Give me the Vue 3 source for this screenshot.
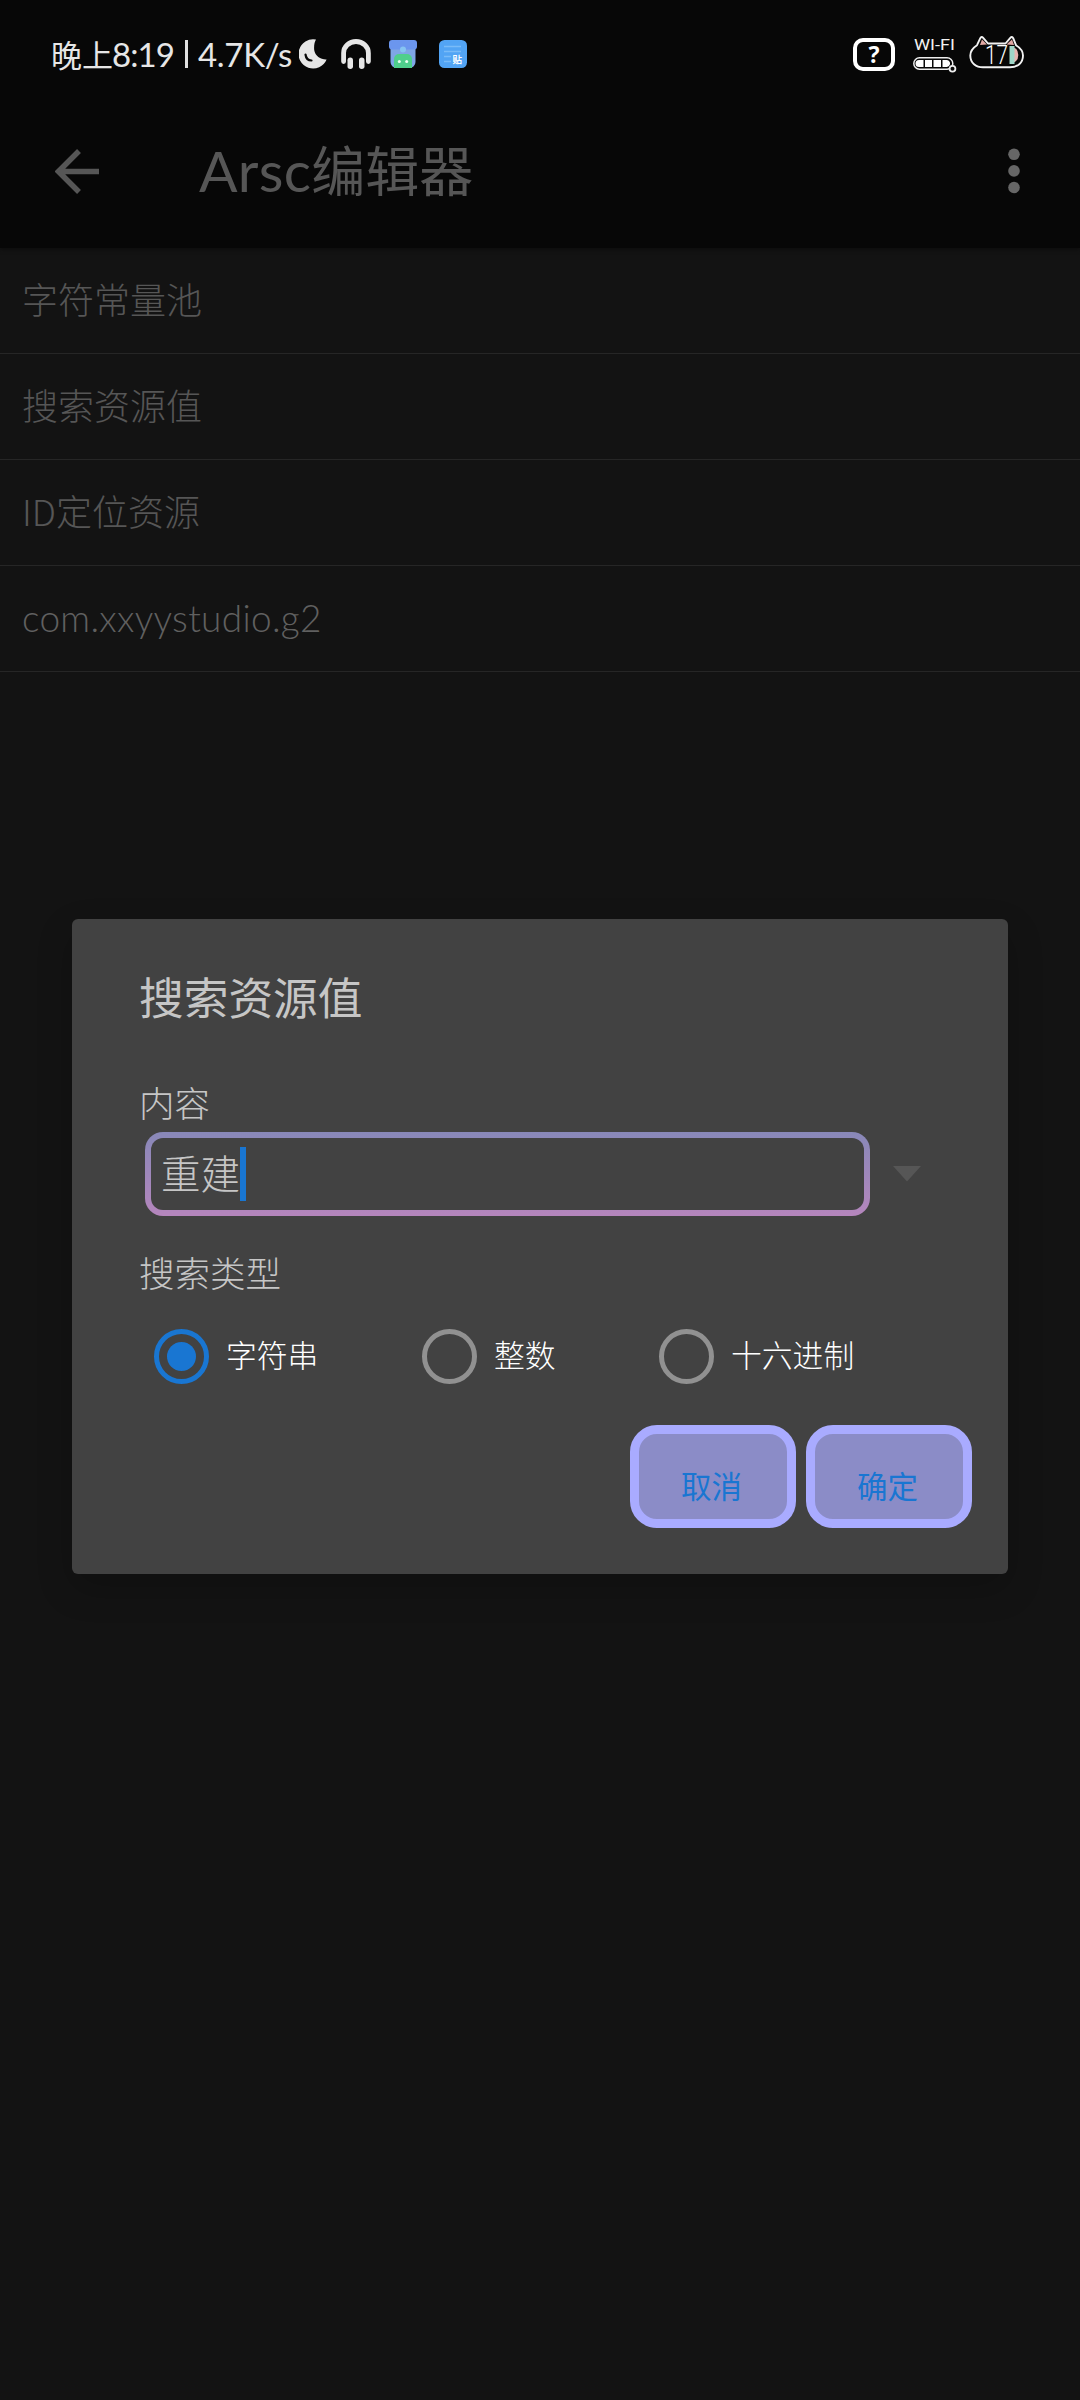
<script setup>
import { ref } from 'vue'

const items = ['字符常量池', '搜索资源值', 'ID定位资源']
const packageName = 'com.xxyystudio.g2'
const keyword = ref('重建')
const types = [
  { id: 'string', label: '字符串' },
  { id: 'integer', label: '整数' },
  { id: 'hex', label: '十六进制' },
]
const selected = ref('string')
</script>

<template>
  <div class="screen">
    <header class="top">
      <div class="status">
        <div class="status-left">
          <span class="clock"><span class="period">晚上</span><span class="time">8:19</span><i class="bar"></i><span class="speed">4.7K/s</span></span>
          <svg class="ic moon" width="28" height="30" viewBox="0 0 28 30">
            <path d="M17 0.6A14.6 14.6 0 1 0 27.6 20.5C22 20.8 16 17 15.2 11C14.8 7 15.5 3 17 .6Z" fill="#e6e6e6" />
            <path d="M6.5 15.5C7 19.500 9.500 21.500 12.500 21.500" fill="none" stroke="#080808" stroke-width="2.200" stroke-linecap="round" />
          </svg>
          <svg class="ic phones" width="30" height="30" viewBox="0 0 30 30">
            <path d="M2.600 22.500V14A12.400 11.500 0 0 1 27.400 14V22.500" fill="none" stroke="#e6e6e6" stroke-width="4.800" stroke-linecap="round" />
            <rect x="6.500" y="18.500" width="5.500" height="11.500" rx="2.700" fill="#e6e6e6" />
            <rect x="18" y="18.500" width="5.500" height="11.500" rx="2.700" fill="#e6e6e6" />
          </svg>
          <svg class="ic bin" width="28" height="28" viewBox="0 0 28 28">
            <path d="M1.500 8H26.500V22A6 6 0 0 1 20.500 28H7.500A6 6 0 0 1 1.500 22Z" fill="#7fa6e6" />
            <rect width="28" height="9.500" rx="3" fill="#6b96ee" />
            <path d="M5 28V19A5 5 0 0 1 10 14H18A5 5 0 0 1 23 19V28Z" fill="#4fcf8c" />
            <circle cx="14" cy="9.500" r="3" fill="#86c4f2" />
            <circle cx="10.300" cy="21.500" r="1.500" fill="#e8fff0" />
            <circle cx="17.700" cy="21.500" r="1.500" fill="#e8fff0" />
          </svg>
          <svg class="ic note" width="28" height="28" viewBox="0 0 28 28">
            <rect width="28" height="28" rx="5.500" fill="#52a4f4" />
            <path d="M5 6.500H22M5 11.500H22M5 16.500H12M5 21.500H12" stroke="#79bbf8" stroke-width="1.500" />
            <text x="13.500" y="23" font-size="9.500" font-weight="700" fill="#fff">贴</text>
          </svg>
        </div>
        <div class="status-right">
          <span class="sim">?</span>
          <span class="wifi">
            <svg class="wifi-label" width="46" height="20" viewBox="0 0 46 20">
              <text x="1" y="15" font-size="15" textLength="41" lengthAdjust="spacingAndGlyphs" fill="#f2f2f2">WI-FI</text>
            </svg>
            <svg class="cell" width="46" height="16" viewBox="0 0 46 16">
              <rect x="0.800" y="0.800" width="39" height="11.400" rx="5.700" fill="none" stroke="#eee" stroke-width="1.500" />
              <path d="M6 3H10.500V10H6A3.500 3.500 0 0 1 6 3ZM12 3H19V10H12ZM20.500 3H28V10H20.500ZM29.500 3H34A3.500 3.500 0 0 1 36 9L34 10H29.500Z" fill="#fff" />
              <circle cx="39.500" cy="11.700" r="2.900" fill="#080808" stroke="#eee" stroke-width="1.800" />
            </svg>
          </span>
          <svg class="cat" width="56" height="34" viewBox="0 0 56 34">
            <path d="M44 12A8 8.500 0 0 1 44 28Z" fill="#e8b4b0" />
            <path d="M40.500 11H45.500V29H40.500Z" fill="#9fd6c8" />
            <path d="M11 10L13 4.500L18 9.500ZM37.500 9.500L43 4.500L45 10Z" fill="#e2a8a4" />
            <path d="M19 8.500L14.200 2.800Q12.500 1 11.300 3.200L8 10.200Q1.300 14.500 1.300 20.500C1.300 28 7 32.300 14 32.300H41C48.500 32.300 54 28 54 20.500Q54 14.500 47 10.200L44.200 3.200Q43 1 41.300 2.800L36.500 8.500Z" fill="none" stroke="#f2f2f2" stroke-width="1.900" stroke-linejoin="round" />
            <text x="16" y="28.500" font-size="26" fill="#fff" textLength="23" lengthAdjust="spacingAndGlyphs">17</text>
          </svg>
        </div>
      </div>
      <div class="toolbar">
        <svg class="back" width="44" height="45" viewBox="0 0 44 45">
          <path d="M44 22.500H5M24 2L3.500 22.500L24 43" fill="none" stroke="#565656" stroke-width="5.500" />
        </svg>
        <h1><span class="latin">Arsc</span>编辑器</h1>
        <svg class="more" width="12" height="46" viewBox="0 0 12 46">
          <circle cx="6" cy="6.300" r="5.800" fill="#666" />
          <circle cx="6" cy="22.900" r="5.800" fill="#666" />
          <circle cx="6" cy="39.500" r="5.800" fill="#666" />
        </svg>
      </div>
    </header>

    <ul class="list">
      <li v-for="t in items" :key="t">{{ t }}</li>
      <li class="pkg">{{ packageName }}</li>
    </ul>

    <section class="dialog">
      <h2>搜索资源值</h2>
      <label class="caption">内容</label>
      <div class="field-row">
        <div class="field"><span class="value">{{ keyword }}</span><i class="caret"></i></div>
        <svg width="28" height="16" viewBox="0 0 28 16"><path d="M0 0H28L14 15.500Z" fill="#565656" /></svg>
      </div>
      <label class="caption second">搜索类型</label>
      <div class="radios">
        <div v-for="t in types" :key="t.id" :class="['radio', t.id, { on: selected === t.id }]" @click="selected = t.id">
          <i class="ring"></i><span>{{ t.label }}</span>
        </div>
      </div>
      <div class="actions">
        <button>取消</button>
        <button>确定</button>
      </div>
    </section>
  </div>
</template>

<style>
body {
  background: #131313;
}
</style>

<style scoped>
.screen {
  position: relative;
  width: 1080px;
  height: 2400px;
  overflow: hidden;
  background: #131313;
  font-family: "Noto Sans CJK SC", sans-serif;
  font-weight: 300;
}
.top {
  height: 248px;
  background: #070707;
  box-shadow: 0 1px 4px #0c0c0c;
}
.status {
  height: 108px;
  display: flex;
  justify-content: space-between;
  color: #e6e6e6;
}
.status-left {
  display: flex;
  padding: 0 0 0 51px;
}
.clock {
  width: 248px;
  display: flex;
  font-size: 31px;
  line-height: 40px;
  padding-top: 34px;
  box-sizing: border-box;
  font-weight: 400;
  white-space: nowrap;
}
.period { width: 61px; }
.time, .speed {
  font-family: Lato, "Noto Sans", sans-serif;
  font-size: 33px;
}
.time { width: 73px; letter-spacing: -0.900px; }
.speed { letter-spacing: -0.300px; }
.bar {
  width: 3px;
  height: 28px;
  margin: 6px 10px 0 0;
  background: #e0e0e0;
}
.ic { margin-top: 39px; flex: none; }
.phones { margin-left: 14px; }
.bin { margin: 40px 0 0 18px; }
.note { margin: 40px 0 0 22px; }
.status-right {
  display: flex;
  padding-right: 55px;
}
.sim {
  width: 42px;
  height: 33px;
  margin: 38px 18px 0 0;
  box-sizing: border-box;
  border: 4.500px solid #fff;
  border-radius: 10px;
  color: #fff;
  font: 700 23px/24px "Noto Sans", sans-serif;
  text-align: center;
}
.wifi {
  width: 56px;
  padding-top: 35px;
  display: flex;
  flex-direction: column;
  font-family: Roboto, sans-serif;
  font-weight: 400;
}
.wifi-label { overflow: visible; }
.cell { margin-top: 2px; }
.cat { margin-top: 35px; font-family: Roboto, sans-serif; font-weight: 300; }
.toolbar {
  height: 126px;
  display: flex;
  align-items: center;
  padding: 0 60px 0 55px;
}
h1 {
  flex: 1;
  margin: -4px 0 0 100px;
  font-size: 54px;
  line-height: 70px;
  font-weight: 400;
  color: #565656;
}
.latin { font-family: Lato, sans-serif; font-size: 57px; letter-spacing: 0.300px; }
.list {
  margin: 0;
  padding: 0;
  list-style: none;
}
.list li {
  height: 106px;
  box-sizing: border-box;
  border-bottom: 1px solid #262626;
  padding-left: 22px;
  font-size: 36px;
  line-height: 101px;
  color: #565656;
}
.list .pkg {
  font-family: Lato, sans-serif;
  font-size: 37px;
  line-height: 104px;
  letter-spacing: 0.300px;
  color: #606060;
}
.dialog {
  position: absolute;
  left: 72px;
  top: 919px;
  width: 936px;
  height: 655px;
  box-sizing: border-box;
  padding: 47px 36px 0 67px;
  border-radius: 6px;
  background: #424242;
  box-shadow: 0 14px 36px rgba(0, 0, 0, 0.2);
  color: #c6c6c6;
}
h2 {
  margin: 0;
  font-size: 44.700px;
  line-height: 60px;
  font-weight: 400;
}
.caption {
  display: block;
  margin-top: 54px;
  height: 52px;
  font-size: 35.500px;
  line-height: 44px;
}
.field-row {
  display: flex;
  align-items: center;
  gap: 23px;
  margin-left: 6px;
}
.field {
  width: 725px;
  height: 84px;
  box-sizing: border-box;
  border: 6px solid transparent;
  border-radius: 18px;
  background: linear-gradient(#424242, #424242) padding-box, linear-gradient(#8888b8, #b586bd) border-box;
  display: flex;
  align-items: center;
  padding-left: 10px;
  font-size: 39.500px;
  line-height: 54px;
}
.value { margin-top: -5px; }
.caret {
  width: 6px;
  height: 54px;
  background: #1976d2;
}
.second { margin-top: 34px; height: 78px; }
.radios {
  display: flex;
  margin-left: 15px;
  height: 84px;
}
.radio {
  display: flex;
  align-items: center;
  gap: 17px;
  height: 56px;
  color: #fff;
  font-size: 30.800px;
  line-height: 40px;
}
.radio span { margin-top: -4px; }
.string { width: 268px; }
.integer { width: 237px; }
.ring {
  width: 55px;
  height: 55px;
  box-sizing: border-box;
  border: 5.500px solid #919191;
  border-radius: 50%;
  padding: 8px;
}
.on .ring {
  border-color: #1976d2;
  background: #1976d2 content-box;
}
.actions {
  display: flex;
  justify-content: flex-end;
  gap: 10px;
  margin-top: 13px;
}
button {
  width: 166px;
  height: 103px;
  box-sizing: border-box;
  border: 9px solid #a9abff;
  border-radius: 27px;
  background: #8b8cc7;
  color: #1976d2;
  font: 400 30.500px/40px "Noto Sans CJK SC", sans-serif;
  padding: 17px 3px 0 0;
}
</style>
